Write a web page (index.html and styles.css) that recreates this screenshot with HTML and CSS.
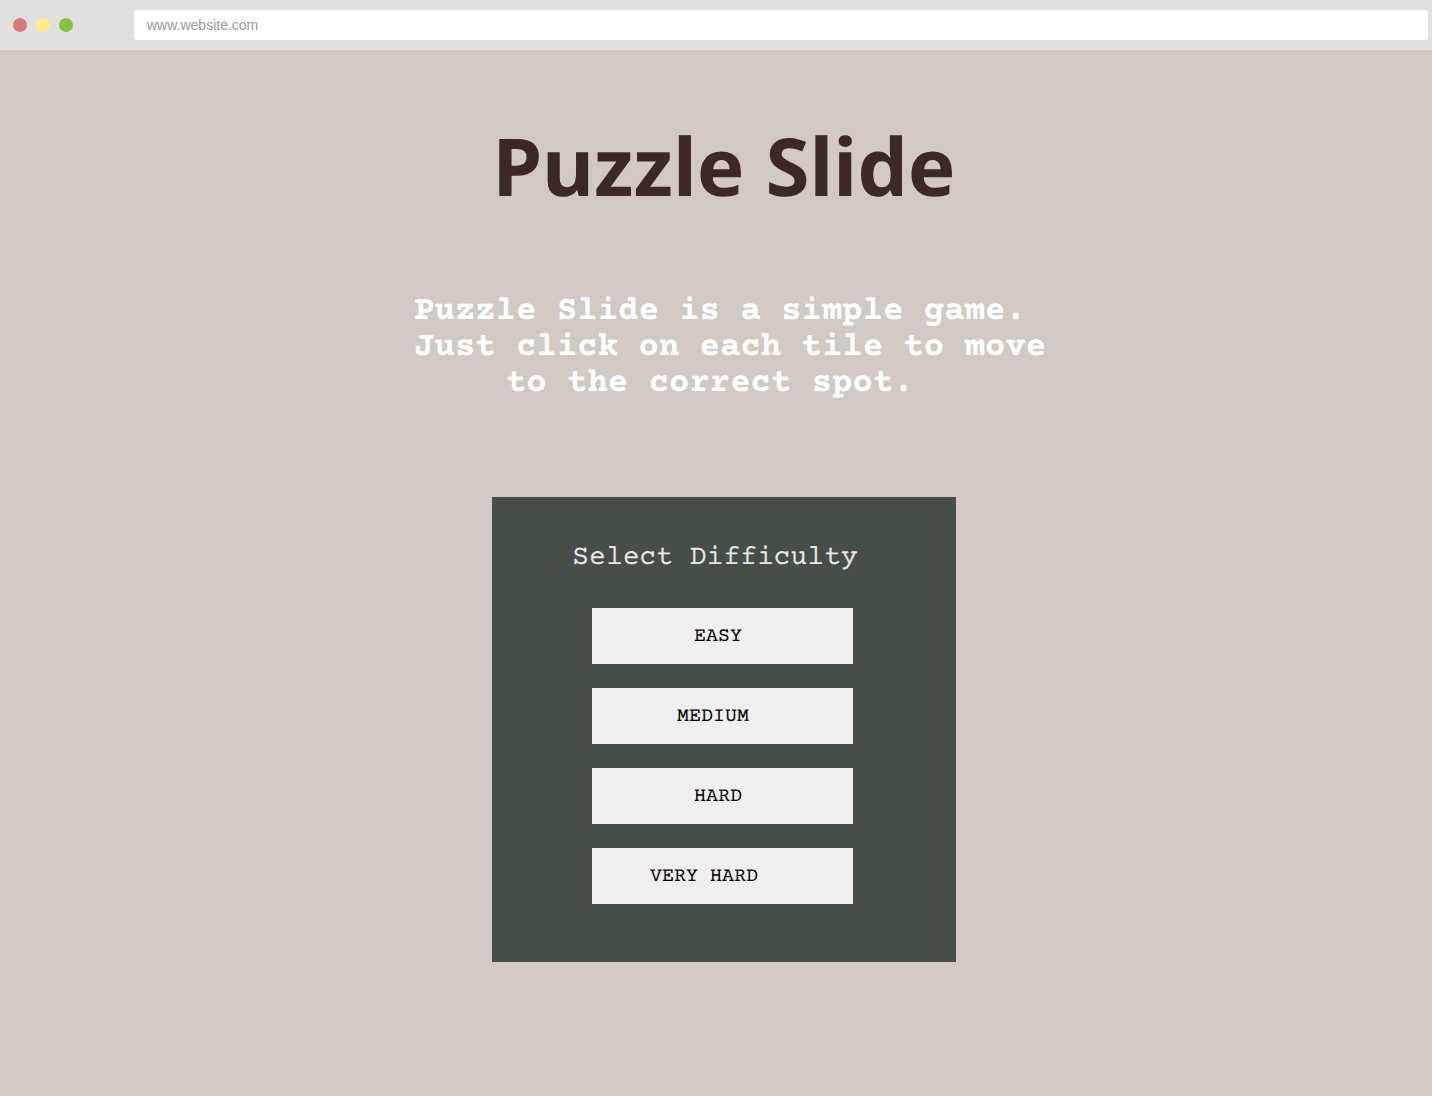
FILE: index.html
```html
<!DOCTYPE html>
<html lang="en">
<head>
<meta charset="utf-8">
<title>Puzzle Slide</title>
<link rel="stylesheet" href="styles.css">
</head>
<body>
<header class="browser">
  <div class="lights">
    <span class="light light-close"></span>
    <span class="light light-minimize"></span>
    <span class="light light-zoom"></span>
  </div>
  <input class="address" type="text" aria-label="Address" value="www.website.com">
</header>
<main class="page">
  <h1 class="title">Puzzle Slide</h1>
  <p class="intro">Puzzle Slide is a simple game.
 Just click on each tile to move
to the correct spot. </p>
  <section class="panel">
    <h2 class="panel-title">Select Difficulty</h2>
    <div class="levels">
      <button class="level" type="button">EASY</button>
      <button class="level level-medium" type="button">MEDIUM</button>
      <button class="level" type="button">HARD</button>
      <button class="level level-very-hard" type="button">VERY HARD</button>
    </div>
  </section>
</main>
</body>
</html>
```
FILE: styles.css
```css
* {
  box-sizing: border-box;
}

body {
  margin: 0;
  min-height: 100vh;
  background: #d2c9c3;
  font-family: "Courier Prime", Courier, "Nimbus Mono PS", FreeMono, "Liberation Mono", monospace;
  text-rendering: geometricPrecision;
}

.browser {
  display: flex;
  align-items: center;
  gap: 61px;
  height: 50px;
  padding: 0 4px 0 13px;
  background: #e0e0e0;
}

.lights {
  display: flex;
  gap: 9px;
}

.light {
  width: 14px;
  height: 14px;
  border-radius: 50%;
}

.light-close {
  background: #d87a77;
}

.light-minimize {
  background: #fdef86;
}

.light-zoom {
  background: #82c341;
}

.address {
  flex: 1;
  min-width: 0;
  height: 30px;
  padding: 0 13px;
  border: 0;
  border-radius: 3px;
  background: #fff;
  color: #999;
  font: 14px "Liberation Sans", Arial, sans-serif;
}

.page {
  display: flex;
  flex-direction: column;
  align-items: center;
  padding: 61px 0 64px 16px;
}

.title {
  margin: 0;
  color: #3c2826;
  font: bold 80px/110px "Noto Sans", "Open Sans", sans-serif;
}

.intro {
  margin: 73px 0 0;
  padding-right: 8px;
  color: #fff;
  font-size: 34px;
  font-weight: bold;
  line-height: 36px;
  text-align: center;
  white-space: pre;
}

.panel {
  width: 464px;
  max-width: 100%;
  margin-top: 95px;
  padding: 41px 103px 58px 100px;
  background: #464e48;
}

.panel-title {
  margin: 0;
  padding-right: 15px;
  color: #e6e6e6;
  font-size: 28px;
  font-weight: normal;
  line-height: 40px;
  display: flex;
  justify-content: center;
  white-space: nowrap;
}

.levels {
  display: flex;
  flex-direction: column;
  gap: 24px;
  margin-top: 30px;
}

.level {
  height: 56px;
  padding: 0 9px 0 0;
  border: 0;
  background: #f1eeef;
  color: #000;
  font-family: inherit;
  font-size: 20px;
  text-align: center;
  text-rendering: inherit;
}

.level-medium {
  padding-right: 19px;
}

.level-very-hard {
  padding-right: 37px;
}
```
